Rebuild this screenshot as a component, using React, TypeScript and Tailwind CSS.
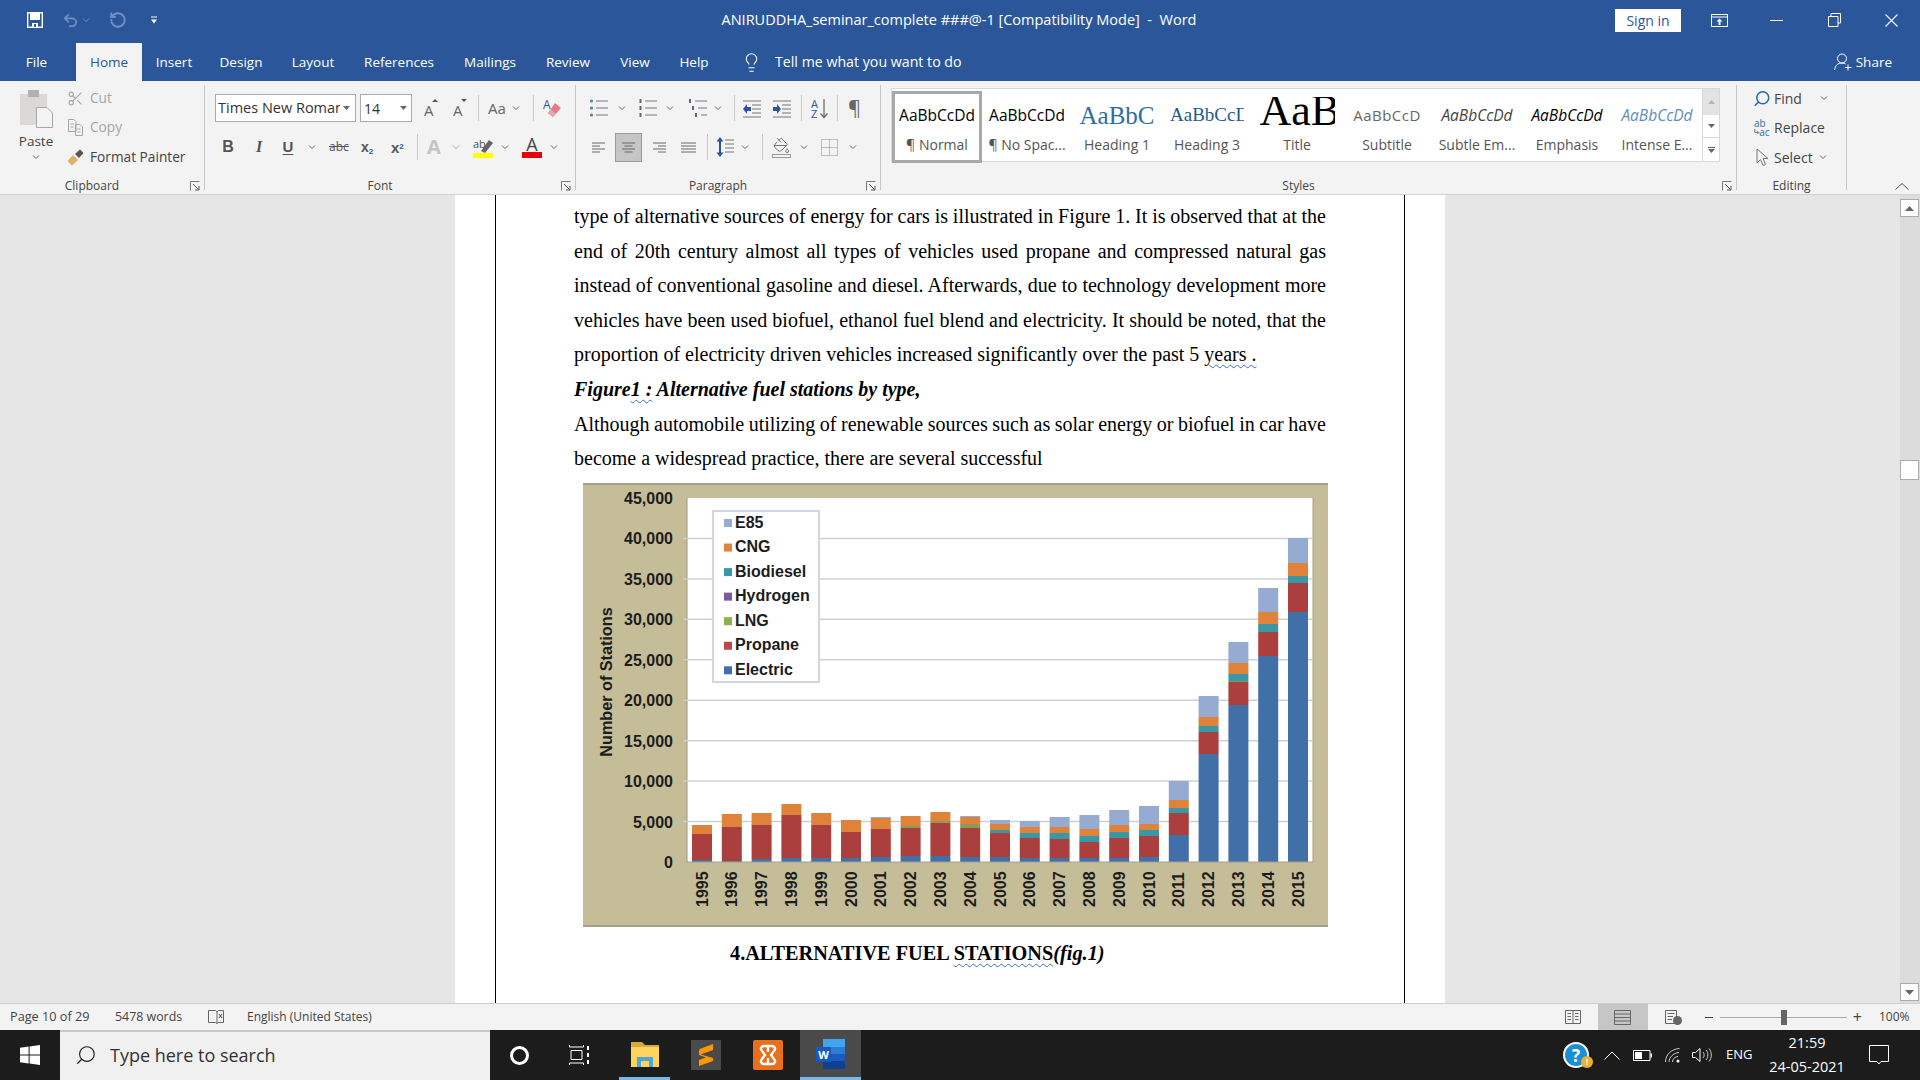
import React from "react";
import { Scissors, Search, Undo2, RotateCcw, PaintBucket, Lightbulb } from "lucide-react";

const ui = "font-['Open_Sans',sans-serif]";

const tabs = [
  { name: "File", w: "w-[76px] pr-[3px]" },
  { name: "Home", w: "w-[66px]" },
  { name: "Insert", w: "w-[64px]" },
  { name: "Design", w: "w-[70px]" },
  { name: "Layout", w: "w-[74px]" },
  { name: "References", w: "w-[98px]" },
  { name: "Mailings", w: "w-[84px]" },
  { name: "Review", w: "w-[72px]" },
  { name: "View", w: "w-[62px]" },
  { name: "Help", w: "w-[56px]" },
];

// cumulative px above the baseline: electric, propane, lng, biodiesel, cng, e85
const bars = [
  [1995, 2, 28, 28, 28, 37, 37],
  [1996, 1, 35, 35, 35, 48, 48],
  [1997, 3, 37, 37, 37, 49, 49],
  [1998, 4, 47, 47, 47, 58, 58],
  [1999, 4, 37, 37, 37, 49, 49],
  [2000, 4, 30, 30, 30, 42, 42],
  [2001, 5, 33, 33, 33, 44, 45],
  [2002, 6, 34, 36, 36, 46, 46],
  [2003, 6, 39, 41, 41, 50, 50],
  [2004, 5, 34, 38, 38, 45, 46],
  [2005, 5, 29, 29, 32, 38, 42],
  [2006, 4, 24, 24, 29, 35, 41],
  [2007, 4, 23, 23, 29, 35, 45],
  [2008, 4, 20, 20, 26, 33, 47],
  [2009, 4, 24, 24, 30, 37, 52],
  [2010, 5, 26, 26, 32, 38, 56],
  [2011, 27, 49, 49, 54, 62, 81],
  [2012, 108, 130, 130, 136, 145, 166],
  [2013, 157, 180, 181, 188, 199, 220],
  [2014, 206, 230, 230, 238, 250, 274],
  [2015, 250, 279, 279, 286, 299, 324],
];
const barColors = ["#4170a8", "#ab3f3e", "#8a9a5b", "#3a97a8", "#e0833a", "#95abd2"];
const legend = [
  ["E85", "#95abd2"],
  ["CNG", "#e0833a"],
  ["Biodiesel", "#3a97a8"],
  ["Hydrogen", "#7a5c9c"],
  ["LNG", "#8fb04f"],
  ["Propane", "#ba4a48"],
  ["Electric", "#4170a8"],
];

function Chart() {
  const font = "'Liberation Sans', Arial, sans-serif";
  return (
    <svg width="745" height="444" viewBox="0 0 745 444" className="block">
      <rect x="0" y="0" width="745" height="444" fill="#c4bd97" />
      <rect x="0" y="0" width="745" height="2" fill="#a3a08c" />
      <rect x="0" y="442" width="745" height="2" fill="#a3a08c" />
      <rect x="104" y="15" width="626" height="364" fill="#fff" />
      <line x1="104" y1="15" x2="104" y2="379" stroke="#9a9686" />
      <line x1="730" y1="15" x2="730" y2="379" stroke="#a89c8c" />
      {[0, 1, 2, 3, 4, 5, 6, 7, 8, 9].map((i) => {
        const y = 15 + i * 40.44;
        const label = ((9 - i) * 5000).toLocaleString("en-US");
        return (
          <g key={i}>
            {i > 0 && i < 9 && <line x1="100" y1={y} x2="730" y2={y} stroke="#cfcfd6" strokeWidth="1.5" />}
            <text x="90" y={y + 6} textAnchor="end" fontFamily={font} fontWeight="700" fontSize="16" fill="#1c1c1c">
              {label}
            </text>
          </g>
        );
      })}
      {bars.map((b, i) => {
        const x = 109 + i * 29.8;
        return (
          <g key={b[0]}>
            {barColors.map((c, s) => {
              const from = s === 0 ? 0 : b[s];
              const to = b[s + 1];
              return to > from ? <rect key={s} x={x} y={379 - to} width="20" height={to - from} fill={c} /> : null;
            })}
            <text
              transform={`translate(${x + 15.5} 424) rotate(-90)`}
              fontFamily={font}
              fontWeight="700"
              fontSize="16"
              fill="#1c1c1c"
            >
              {b[0]}
            </text>
          </g>
        );
      })}
      <line x1="104" y1="379" x2="730" y2="379" stroke="#a89c8c" />
      <text
        transform="translate(29 199) rotate(-90)"
        textAnchor="middle"
        fontFamily={font}
        fontWeight="700"
        fontSize="16.2"
        fill="#1c1c1c"
      >
        Number of Stations
      </text>
      <rect x="130" y="28" width="106" height="171" fill="#fff" stroke="#d3d6e2" strokeWidth="2" />
      {legend.map(([name, color], i) => (
        <g key={name}>
          <rect x="141" y={36 + i * 24.55} width="8" height="8" fill={color} />
          <text x="152" y={44.5 + i * 24.55} fontFamily={font} fontWeight="700" fontSize="16" fill="#1c1c1c">
            {name}
          </text>
        </g>
      ))}
    </svg>
  );
}

function Chev({ className = "", color = "#666" }: { className?: string; color?: string }) {
  return (
    <svg viewBox="0 0 8 5" className={`w-[8px] h-[5px] shrink-0 ${className}`}>
      <polyline points="1,0.5 4,3.5 7,0.5" fill="none" stroke={color} strokeWidth="1" />
    </svg>
  );
}

function Sep({ className = "" }: { className?: string }) {
  return <div className={`w-px h-[26px] bg-[#c8c8c8] shrink-0 ${className}`} />;
}

function Launcher() {
  return (
    <svg viewBox="0 0 10 10" className="w-[10px] h-[10px] shrink-0">
      <path d="M0.5 9.5V0.5H9.5" fill="none" stroke="#7a7a7a" />
      <path d="M3 3L8.5 8.5M9 5V9H5" fill="none" stroke="#555" />
    </svg>
  );
}

function Group({
  w,
  label,
  launcher,
  border = true,
  children,
}: {
  w: string;
  label: string;
  launcher?: boolean;
  border?: boolean;
  children: React.ReactNode;
}) {
  return (
    <div className={`${w} h-[105px] mt-[4px] flex flex-col shrink-0 ${border ? "border-r border-[#c6c6c6]" : ""}`}>
      <div className="h-[93px]">{children}</div>
      <div className="h-[12px] flex text-[12px] leading-[16px] text-[#444]">
        <div className="flex-1 text-center">{label}</div>
        {launcher && (
          <div className="w-[20px] pt-[3px] pl-[6px]">
            <Launcher />
          </div>
        )}
      </div>
    </div>
  );
}

function LinesIcon({ className = "", kind }: { className?: string; kind: "left" | "center" | "right" | "justify" }) {
  const rows = [0, 1, 2, 3];
  const short = kind === "justify" ? 13 : 8;
  return (
    <svg viewBox="0 0 13 11" preserveAspectRatio="none" className={`h-[11px] shrink-0 ${className}`}>
      {rows.map((r) => {
        const len = r % 2 === 0 ? 13 : short;
        const x = kind === "right" ? 13 - len : kind === "center" ? (13 - len) / 2 : 0;
        return <line key={r} x1={x} x2={x + len} y1={1 + r * 3} y2={1 + r * 3} stroke="#666" />;
      })}
    </svg>
  );
}

function ListIcon({ kind, className = "" }: { kind: "bullet" | "number" | "multi"; className?: string }) {
  const marks = [2, 9, 16];
  return (
    <svg viewBox="0 0 20 19" className={`w-[20px] h-[19px] shrink-0 ${className}`}>
      {marks.map((y, i) => (
        <g key={y}>
          {kind === "bullet" && <circle cx="2.5" cy={y} r="1.6" fill="#5a7ea8" />}
          {kind === "number" && <rect x="1.5" y={y - 2} width="2" height="4" fill="#666" />}
          {kind === "multi" && <rect x={1 + i * 3} y={y - 2} width="2" height="4" fill="#667" />}
          <line x1={kind === "multi" ? 7 + i * 3 : 7} x2="19" y1={y} y2={y} stroke="#777" />
        </g>
      ))}
    </svg>
  );
}

function IndentIcon({ flip, className = "" }: { flip?: boolean; className?: string }) {
  return (
    <svg viewBox="0 0 20 19" className={`w-[20px] h-[19px] shrink-0 ${className}`}>
      {[2, 6, 10, 14, 18].map((y) => (
        <line key={y} x1={y === 2 || y === 18 ? 1 : 10} x2="19" y1={y} y2={y} stroke="#777" />
      ))}
      {flip ? (
        <path d="M1 8H5V5L9 10L5 15V12H1Z" fill="#2b579a" />
      ) : (
        <path d="M9 8H5V5L1 10L5 15V12H9Z" fill="#2b579a" />
      )}
    </svg>
  );
}

function StyleCell({
  label,
  children,
  active,
}: {
  label: string;
  children: React.ReactNode;
  active?: boolean;
}) {
  return (
    <div
      className={`w-[90px] shrink-0 h-[72px] flex flex-col items-center overflow-hidden ${
        active ? "border-[3px] border-[#a9a9a9] h-[70px] mt-[2px] bg-white" : "pt-[5px]"
      }`}
    >
      <div className="w-[84px] h-[43px] flex items-center justify-center overflow-hidden whitespace-nowrap">
        {children}
      </div>
      <div className="text-[14px] leading-[18px] text-[#555] whitespace-nowrap mt-[-1px]">{label}</div>
    </div>
  );
}

function EditRow({ icon, text, chev }: { icon: React.ReactNode; text: string; chev?: string }) {
  return (
    <div className="h-[26px] flex items-center">
      <div className="w-[18px] ml-[16px] shrink-0 flex justify-center">{icon}</div>
      <span className="ml-[3px] text-[14px] text-[#444]">{text}</span>
      {chev && <Chev className={chev} />}
    </div>
  );
}

function TopBar() {
  return (
    <div className="h-[40px] bg-[#2b579a] flex items-center text-white shrink-0">
      <div className="w-[720px] flex items-center shrink-0">
        <svg viewBox="0 0 16 16" className="w-[16px] h-[16px] ml-[27px]">
          <path d="M0.7 0.7H15.3V15.3H0.7Z" fill="none" stroke="#fff" strokeWidth="1.4" />
          <rect x="3" y="1" width="10" height="7" fill="#fff" />
          <rect x="5" y="11" width="6" height="4" fill="#fff" />
          <rect x="7" y="12" width="2" height="3" fill="#2b579a" />
        </svg>
        <Undo2 className="w-[19px] h-[17px] ml-[18px] text-[#6f8fc4]" strokeWidth={2.4} />
        <Chev className="ml-[2px]" color="#6f8fc4" />
        <RotateCcw className="w-[18px] h-[18px] ml-[19px] text-[#6f8fc4]" strokeWidth={2.6} />
        <svg viewBox="0 0 6 8" className="w-[6px] h-[8px] ml-[24px]">
          <line x1="0" x2="6" y1="1" y2="1" stroke="#fff" />
          <path d="M0 3.5H6L3 7.5Z" fill="#fff" />
        </svg>
      </div>
      <div className={`${ui} w-[478px] text-center text-[14.5px] whitespace-nowrap shrink-0`}>
        ANIRUDDHA_seminar_complete ###@-1 [Compatibility Mode] &nbsp;-&nbsp; Word
      </div>
      <div className={`${ui} ml-[417px] w-[66px] h-[23px] bg-white text-[#2b579a] text-[14px] flex items-center justify-center shrink-0`}>
        Sign in
      </div>
      <svg viewBox="0 0 17 13" className="w-[17px] h-[13px] ml-[30px] shrink-0">
        <path d="M0.5 0.5H16.5V12.5H0.5ZM0.5 3H16.5" fill="none" stroke="#fff" />
        <path d="M8.5 4.5L11.5 7.5H9.5V11H7.5V7.5H5.5Z" fill="#fff" />
      </svg>
      <div className="w-[13px] h-px bg-white ml-[42px] shrink-0" />
      <svg viewBox="0 0 13 14" className="w-[13px] h-[14px] ml-[45px] shrink-0">
        <path d="M3 3V0.5H12.5V10H10M0.5 3.5H10V13.5H0.5Z" fill="none" stroke="#fff" />
      </svg>
      <svg viewBox="0 0 13 13" className="w-[13px] h-[13px] ml-[44px] shrink-0">
        <path d="M0.5 0.5L12.5 12.5M12.5 0.5L0.5 12.5" stroke="#fff" strokeWidth="1.1" />
      </svg>
    </div>
  );
}

function TabRow() {
  return (
    <div className={`${ui} h-[41px] bg-[#2b579a] flex items-end text-white text-[13.5px] shrink-0`}>
      {tabs.map((t) => (
        <div
          key={t.name}
          className={`${t.w} h-[38px] flex items-center justify-center shrink-0 ${
            t.name === "Home" ? "bg-[#f3f3f3] text-[#2b579a]" : ""
          }`}
        >
          {t.name}
        </div>
      ))}
      <div className="h-[38px] flex items-center ml-[19px]">
        <Lightbulb className="w-[21px] h-[21px] text-white" strokeWidth={1.2} />
        <span className="ml-[13px] text-[14.2px]">Tell me what you want to do</span>
      </div>
      <div className="h-[38px] flex items-center ml-auto pr-[28px]">
        <svg viewBox="0 0 18 18" className="w-[18px] h-[18px]">
          <circle cx="8" cy="5.5" r="4.5" fill="none" stroke="#fff" />
          <path d="M0.5 17C1.5 12 4 10 8 10C9.5 10 10.5 10.5 11.5 11" fill="none" stroke="#fff" />
          <path d="M14 11.5V17.5M11 14.5H17.5" stroke="#fff" />
        </svg>
        <span className="ml-[4px]">Share</span>
      </div>
    </div>
  );
}

function Ribbon() {
  return (
    <div className={`${ui} h-[114px] bg-[#f3f3f3] border-b border-[#d2d2d2] flex shrink-0`}>
      <Group w="w-[205px]" label="Clipboard" launcher>
        <div className="flex">
          <div className="w-[60px] ml-[6px] flex flex-col items-center shrink-0">
            <svg viewBox="0 0 33 38" className="w-[33px] h-[38px] mt-[5px]">
              <rect x="0" y="4" width="27" height="31" fill="#dcd8d8" />
              <rect x="8" y="0" width="11" height="7" fill="#b5b0b0" />
              <path d="M16.5 17.5H27L32.5 23V37.5H16.5Z" fill="#f3f3f3" stroke="#a8a8a8" />
            </svg>
            <div className="text-[13.5px] leading-[18px] text-[#444] mt-[4px]">Paste</div>
            <Chev className="mt-[5px]" />
          </div>
          <div className="flex flex-col gap-[3.5px] text-[13.7px] text-[#a6a6a6]">
            <div className="h-[26px] flex items-center">
              <Scissors className="w-[17px] h-[17px] ml-[1px] text-[#a6a6a6]" strokeWidth={1.5} />
              <span className="ml-[6px]">Cut</span>
            </div>
            <div className="h-[26px] flex items-center">
              <svg viewBox="0 0 17 17" className="w-[17px] h-[17px] ml-[1px]">
                <path d="M1.5 0.5H7L9 2.5V12.5H1.5ZM8.5 5.5H13L15.5 8V16.5H8.5Z" fill="#f3f3f3" stroke="#a6a6a6" />
                <path d="M3.5 5H7M3.5 8H6.5M10.5 10H13.5M10.5 13H13.5" stroke="#a6a6a6" />
              </svg>
              <span className="ml-[6px]">Copy</span>
            </div>
            <div className="h-[26px] flex items-center text-[#444]">
              <svg viewBox="0 0 17 17" className="w-[17px] h-[17px] ml-[1px]">
                <path d="M0.5 12L6 6L11 11L5 16.5Z" fill="#dfb065" />
                <path d="M8 5L13 0.5L16.5 4L12 9Z" fill="#555" />
              </svg>
              <span className="ml-[6px] whitespace-nowrap">Format Painter</span>
            </div>
          </div>
        </div>
      </Group>

      <Group w="w-[371px]" label="Font" launcher>
        <div className="flex items-center h-[28px] mt-[9px]">
          <div className="ml-[10px] w-[141px] h-[28px] bg-white border border-[#ababab] flex items-center text-[14.5px] text-[#333] pl-[2px] shrink-0">
            <span className="w-[122px] overflow-hidden whitespace-nowrap">Times New Roman</span>
            <svg viewBox="0 0 7 4" className="w-[7px] h-[4px] ml-[3px]"><path d="M0 0H7L3.5 4Z" fill="#666" /></svg>
          </div>
          <div className="ml-[4px] w-[52px] h-[28px] bg-white border border-[#ababab] flex items-center text-[14px] text-[#333] pl-[3px] shrink-0">
            <span className="w-[36px]">14</span>
            <svg viewBox="0 0 7 4" className="w-[7px] h-[4px]"><path d="M0 0H7L3.5 4Z" fill="#666" /></svg>
          </div>
          <svg viewBox="0 0 14 18" className="w-[14px] h-[18px] ml-[12px] shrink-0">
            <text x="0" y="17" fontSize="15" fill="#666" fontFamily="Open Sans, sans-serif">A</text>
            <path d="M8 3L11 0L14 3Z" fill="#555" />
          </svg>
          <svg viewBox="0 0 14 18" className="w-[14px] h-[18px] ml-[15px] shrink-0">
            <text x="0" y="17" fontSize="15" fill="#666" fontFamily="Open Sans, sans-serif">A</text>
            <path d="M8 0L11 3L14 0Z" fill="#555" />
          </svg>
          <Sep className="ml-[11px]" />
          <span className="ml-[9px] w-[18px] text-[15px] text-[#666] shrink-0">Aa</span>
          <Chev className="ml-[6px]" />
          <Sep className="ml-[13px]" />
          <svg viewBox="0 0 18 20" className="w-[18px] h-[20px] ml-[9px] shrink-0">
            <text x="0" y="11" fontSize="12" fill="#2b579a" fontFamily="Open Sans, sans-serif">A</text>
            <path d="M12 5L18 10L10 19L5 15Z" fill="#e8798a" />
            <path d="M5 15L8 11.5L13 16L10 19Z" fill="#e0a8b0" />
          </svg>
        </div>
        <div className="flex items-center h-[28px] mt-[11px] text-[#555]">
          <span className="ml-[15px] w-[16px] text-center font-['Liberation_Sans',sans-serif] font-bold text-[16px] shrink-0">B</span>
          <span className="ml-[15px] w-[16px] text-center font-['Liberation_Serif',serif] italic font-bold text-[16px] shrink-0">I</span>
          <span className="ml-[13px] w-[16px] text-center font-['Liberation_Sans',sans-serif] font-bold text-[15px] underline underline-offset-2 shrink-0">U</span>
          <Chev className="ml-[12px]" />
          <span className="ml-[13px] w-[19px] text-center text-[12px] line-through shrink-0">abc</span>
          <span className="ml-[13px] w-[14px] font-['Liberation_Sans',sans-serif] font-bold text-[14px] shrink-0 leading-none">
            x<sub className="text-[8px] text-[#2b579a]">2</sub>
          </span>
          <span className="ml-[16px] w-[15px] font-['Liberation_Sans',sans-serif] font-bold text-[15px] shrink-0 leading-none">
            x<sup className="text-[8px] text-[#2b579a]">2</sup>
          </span>
          <Sep className="ml-[11px]" />
          <span className="ml-[9px] w-[16px] text-[20px] text-[#c4c4c4] font-bold leading-none shrink-0">A</span>
          <Chev className="ml-[9px]" color="#b0b0b0" />
          <svg viewBox="0 0 20 21" className="w-[20px] h-[21px] ml-[13px] shrink-0">
            <text x="0" y="11" fontSize="11" fill="#555" fontFamily="Open Sans, sans-serif">ab</text>
            <path d="M8 14L16 3L20 6L12 16Z" fill="#666" />
            <rect x="0" y="16" width="20" height="5" fill="#ffff00" />
          </svg>
          <Chev className="ml-[8px]" />
          <svg viewBox="0 0 20 22" className="w-[20px] h-[22px] ml-[13px] shrink-0">
            <text x="10" y="15" textAnchor="middle" fontSize="18" fill="#444" fontFamily="Open Sans, sans-serif">A</text>
            <rect x="0" y="16" width="20" height="6" fill="#e8000b" />
          </svg>
          <Chev className="ml-[8px]" />
        </div>
      </Group>

      <Group w="w-[305px]" label="Paragraph" launcher>
        <div className="flex items-center h-[28px] mt-[9px]">
          <ListIcon kind="bullet" className="ml-[13px]" />
          <Chev className="ml-[9px]" />
          <ListIcon kind="number" className="ml-[12px]" />
          <Chev className="ml-[8px]" />
          <ListIcon kind="multi" className="ml-[14px] w-[19px]" />
          <Chev className="ml-[6px]" />
          <Sep className="ml-[12px]" />
          <IndentIcon className="ml-[7px] w-[19px]" />
          <IndentIcon flip className="ml-[10px]" />
          <Sep className="ml-[9px]" />
          <svg viewBox="0 0 18 21" className="w-[18px] h-[21px] ml-[9px] shrink-0">
            <text x="0" y="9.5" fontSize="11" fill="#2b579a" fontFamily="Open Sans, sans-serif">A</text>
            <text x="0" y="20" fontSize="11" fill="#2b579a" fontFamily="Open Sans, sans-serif">Z</text>
            <path d="M13 1V19M9.5 15.5L13 19.5L16.5 15.5" fill="none" stroke="#666" strokeWidth="1.2" />
          </svg>
          <Sep className="ml-[8px]" />
          <span className="ml-[10px] w-[12px] text-[20px] leading-none text-[#666] shrink-0">¶</span>
        </div>
        <div className="flex items-center h-[28px] mt-[11px]">
          <LinesIcon kind="left" className="ml-[16px] w-[13px]" />
          <div className="ml-[10px] w-[27px] h-[29px] bg-[#c6c6c6] border border-[#9b9b9b] flex items-center justify-center shrink-0">
            <LinesIcon kind="center" className="w-[13px]" />
          </div>
          <LinesIcon kind="right" className="ml-[11px] w-[13px]" />
          <LinesIcon kind="justify" className="ml-[15px] w-[15px]" />
          <Sep className="ml-[11px]" />
          <svg viewBox="0 0 18 20" className="w-[18px] h-[20px] ml-[8px] shrink-0">
            <path d="M4 0L7.5 4.5H5V15.5H7.5L4 20L0.5 15.5H3V4.5H0.5Z" fill="#2b579a" />
            <path d="M9 3H18M9 7H18M9 11H18M9 15H18" stroke="#777" />
          </svg>
          <Chev className="ml-[7px]" />
          <Sep className="ml-[13px]" />
          <div className="ml-[9px] w-[19px] shrink-0">
            <PaintBucket className="w-[19px] h-[17px] text-[#666]" strokeWidth={1.3} />
            <div className="w-[19px] h-[4px] border border-[#999] bg-[#f3f3f3]" />
          </div>
          <Chev className="ml-[9px]" />
          <svg viewBox="0 0 17 17" className="w-[17px] h-[17px] ml-[13px] shrink-0">
            <path d="M0.5 0.5H16.5V16.5H0.5ZM8.5 0.5V16.5M0.5 8.5H16.5" fill="none" stroke="#888" strokeDasharray="1 1" />
          </svg>
          <Chev className="ml-[11px]" />
        </div>
      </Group>

      <Group w="w-[856px]" label="Styles" launcher>
        <div className="flex ml-[10px] mt-[3px]">
          <div className="h-[74px] bg-white border-y border-l border-[#d8d8d8] flex">
            <StyleCell label="¶ Normal" active>
              <span className="text-[15.5px] text-black">AaBbCcDd</span>
            </StyleCell>
            <StyleCell label="¶ No Spac...">
              <span className="text-[15.5px] text-black">AaBbCcDd</span>
            </StyleCell>
            <StyleCell label="Heading 1">
              <span className="font-['Liberation_Serif',serif] text-[25px] text-[#2e6da4]">AaBbC</span>
            </StyleCell>
            <StyleCell label="Heading 3">
              <div className="w-[74px] overflow-hidden font-['Liberation_Serif',serif] text-[19px] text-[#245a8d]">AaBbCcD</div>
            </StyleCell>
            <StyleCell label="Title">
              <div className="w-[75px] h-[29px] self-start mt-[3px] overflow-hidden font-['Liberation_Serif',serif] text-[44px] leading-[27px] text-black">
                AaB
              </div>
            </StyleCell>
            <StyleCell label="Subtitle">
              <span className="text-[15px] tracking-[0.5px] text-[#666]">AaBbCcD</span>
            </StyleCell>
            <StyleCell label="Subtle Em...">
              <span className="text-[15.5px] italic text-[#444]">AaBbCcDd</span>
            </StyleCell>
            <StyleCell label="Emphasis">
              <span className="text-[15.5px] italic text-black">AaBbCcDd</span>
            </StyleCell>
            <StyleCell label="Intense E...">
              <span className="text-[15.5px] italic text-[#5b8ec0]">AaBbCcDd</span>
            </StyleCell>
          </div>
          <div className="w-[18px] h-[74px] flex flex-col border border-[#d8d8d8] bg-white">
            <div className="h-[26px] bg-[#e3e3e3] flex items-center justify-center">
              <svg viewBox="0 0 7 4" className="w-[7px] h-[4px]"><path d="M0 4H7L3.5 0Z" fill="#b5b5b5" /></svg>
            </div>
            <div className="h-[23px] border-b border-[#d8d8d8] flex items-center justify-center">
              <svg viewBox="0 0 7 4" className="w-[7px] h-[4px]"><path d="M0 0H7L3.5 4Z" fill="#666" /></svg>
            </div>
            <div className="flex-1 flex flex-col gap-[1px] items-center justify-center">
              <div className="w-[7px] h-px bg-[#666]" />
              <svg viewBox="0 0 7 4" className="w-[7px] h-[4px]"><path d="M0 0H7L3.5 4Z" fill="#666" /></svg>
            </div>
          </div>
        </div>
      </Group>

      <Group w="w-[110px]" label="Editing">
        <div className="flex flex-col gap-[3.5px]">
          <EditRow
            icon={<Search className="w-[19px] h-[19px] text-[#2b6ca8] -scale-x-100" strokeWidth={2.1} />}
            text="Find"
            chev="ml-[18px]"
          />
          <EditRow
            icon={
              <svg viewBox="0 0 20 20" className="w-[20px] h-[20px]">
                <text x="1" y="9" fontSize="11" fill="#2b6ca8" fontFamily="Open Sans, sans-serif">ab</text>
                <text x="7" y="19" fontSize="11" fill="#2b6ca8" fontFamily="Open Sans, sans-serif">ac</text>
                <path d="M2 11V15H6M4.5 13L6.5 15L4.5 17" fill="none" stroke="#666" />
              </svg>
            }
            text="Replace"
          />
          <EditRow
            icon={
              <svg viewBox="0 0 13 19" className="w-[13px] h-[19px]">
                <path d="M1 1V15L4.5 11.5L7 17.5L9.5 16.5L7 10.5H12Z" fill="#f3f3f3" stroke="#777" />
              </svg>
            }
            text="Select"
            chev="ml-[6px]"
          />
        </div>
      </Group>
      <div className="flex-1 flex items-end justify-end pr-[11px] pb-[4px]">
        <svg viewBox="0 0 14 7" className="w-[14px] h-[7px]">
          <polyline points="0.5,6.5 7,0.5 13.5,6.5" fill="none" stroke="#555" />
        </svg>
      </div>
    </div>
  );
}

// one justified line with the reference's own break; word spacing is squeezed so the line never wraps
function Line({ children }: { children: React.ReactNode }) {
  return <span className="block text-justify [text-align-last:justify] [word-spacing:-2px]">{children}</span>;
}

function Page() {
  const spell = "underline decoration-wavy decoration-[#3f70b5] decoration-1 underline-offset-[3px]";
  return (
    <div className="ml-[455px] w-[990px] h-full bg-white shrink-0">
      <div className="ml-[40px] w-[910px] h-full border-x border-black pl-[78px] pt-[4px] font-['Liberation_Serif',serif] text-[20px] leading-[34.6px] text-black">
        <div className="w-[752px]">
          <p>
            <Line>type of alternative sources of energy for cars is illustrated in Figure 1. It is observed that at the</Line>
            <Line>end of 20th century almost all types of vehicles used propane and compressed natural gas</Line>
            <Line>instead of conventional gasoline and diesel. Afterwards, due to technology development more</Line>
            <Line>vehicles have been used biofuel, ethanol fuel blend and electricity. It should be noted, that the</Line>
            proportion of electricity driven vehicles increased significantly over the past 5{" "}
            <span className={spell}>years .</span>
          </p>
          <p className="font-bold italic">
            Figure<span className={spell}>1 :</span> Alternative fuel stations by type,
          </p>
          <p>
            <Line>Although automobile utilizing of renewable sources such as solar energy or biofuel in car have</Line>
            become a widespread practice, there are several successful
          </p>
          <div className="mt-[7px] ml-[9px] w-[745px]">
            <Chart />
          </div>
          <p className="font-bold text-[20.3px] mt-[9px] pl-[156px] whitespace-nowrap">
            4.ALTERNATIVE FUEL <span className={spell}>STATIONS</span>
            <span className="italic">(fig.1)</span>
          </p>
        </div>
      </div>
    </div>
  );
}

function Scrollbar() {
  return (
    <div className="ml-auto w-[20px] h-full bg-[#dcdcdc] flex flex-col shrink-0">
      <div className="mt-[4px] h-[18px] w-[19px] bg-white border border-[#ababab] flex items-center justify-center">
        <svg viewBox="0 0 9 5" className="w-[9px] h-[5px]"><path d="M0 5H9L4.5 0Z" fill="#666" /></svg>
      </div>
      <div className="mt-[243px] h-[20px] w-[19px] bg-white border border-[#ababab]" />
      <div className="mt-auto mb-[2px] h-[18px] w-[19px] bg-white border border-[#ababab] flex items-center justify-center">
        <svg viewBox="0 0 9 5" className="w-[9px] h-[5px]"><path d="M0 0H9L4.5 5Z" fill="#666" /></svg>
      </div>
    </div>
  );
}

function StatusBar() {
  return (
    <div className={`${ui} h-[27px] bg-[#f3f3f3] border-t border-[#cfcfcf] flex items-center text-[12px] text-[#444] shrink-0`}>
      <span className="ml-[10px] w-[105px] whitespace-nowrap text-[12.7px]">Page 10 of 29</span>
      <span className="w-[93px] whitespace-nowrap text-[12.4px]">5478 words</span>
      <svg viewBox="0 0 16 14" className="w-[16px] h-[14px]">
        <path d="M0.5 0.5H7.5L9 2V13.5L7.5 12.5H0.5ZM9 2L10.5 0.5H15.5V12.5H10.5L9 13.5" fill="none" stroke="#666" />
        <path d="M11 4L14 8M14 4L11 8" stroke="#444" />
      </svg>
      <span className="ml-[23px] whitespace-nowrap">English (United States)</span>
      <div className="ml-auto flex items-center h-full pr-[11px]">
        <svg viewBox="0 0 16 14" className="w-[16px] h-[14px]">
          <path d="M0.5 0.5H15.5V13.5H0.5ZM8 0.5V13.5M2.5 3.5H6M2.5 6.5H6M2.5 9.5H6M10 3.5H13.5M10 6.5H13.5M10 9.5H13.5" fill="none" stroke="#666" />
        </svg>
        <div className="ml-[17px] w-[50px] h-full bg-[#c6c6c6] flex items-center justify-center">
          <svg viewBox="0 0 17 15" className="w-[17px] h-[15px]">
            <path d="M0.5 0.5H16.5V14.5H0.5ZM0.5 4H16.5M0.5 7.5H16.5M0.5 11H16.5" fill="none" stroke="#666" />
          </svg>
        </div>
        <svg viewBox="0 0 17 15" className="w-[17px] h-[15px] ml-[17px]">
          <path d="M0.5 0.5H11.5V13.5H0.5ZM2.5 3.5H9.5M2.5 6.5H8M2.5 9.5H7" fill="none" stroke="#666" />
          <circle cx="12.5" cy="10.5" r="4.5" fill="#666" />
        </svg>
        <div className="ml-[23px] w-[8px] h-px bg-[#444]" />
        <div className="ml-[7px] w-[127px] h-px bg-[#aaa] relative">
          <div className="absolute left-[61px] top-[-7px] w-[6px] h-[15px] bg-[#666]" />
        </div>
        <span className="ml-[6px] text-[16px] leading-none">+</span>
        <span className="ml-[17px] w-[30px] whitespace-nowrap">100%</span>
      </div>
    </div>
  );
}

function Taskbar() {
  return (
    <div className={`${ui} h-[50px] bg-[#1c1c1c] flex items-center text-white shrink-0`}>
      <div className="w-[60px] h-full flex items-center justify-center shrink-0">
        <svg viewBox="0 0 20 20" className="w-[20px] h-[20px]">
          <path d="M0 2.8L8.6 1.6V9.5H0ZM9.6 1.5L20 0V9.5H9.6ZM0 10.5H8.6V18.4L0 17.2ZM9.6 10.5H20V20L9.6 18.5Z" fill="#fff" />
        </svg>
      </div>
      <div className="w-[430px] h-full bg-[#f0f0f0] border-t-2 border-[#c8c8c8] flex items-center text-[#333] text-[18px] pb-[2px] shrink-0">
        <Search className="w-[22px] h-[22px] ml-[15px] -scale-x-100 text-[#222]" strokeWidth={1.3} />
        <span className="ml-[13px] whitespace-nowrap">Type here to search</span>
      </div>
      <div className="ml-[20px] w-[19px] h-[19px] rounded-full border-[3px] border-white shrink-0" />
      <svg viewBox="0 0 21 20" className="w-[21px] h-[20px] ml-[40px] shrink-0">
        <path d="M0.5 0V2H14.5V0M0.5 20V18H14.5V20M2 5.5H13V14.5H2Z" fill="none" stroke="#fff" />
        <path d="M19 1V5M19 8V12M19 15V19" stroke="#fff" strokeWidth="2" />
      </svg>
      <div className="ml-[29px] w-[51px] h-full flex items-center justify-center border-b-[3px] border-[#76b9ed] shrink-0">
        <svg viewBox="0 0 28 26" className="w-[28px] h-[26px]">
          <path d="M0 1H11L14 4H28V7H0Z" fill="#d9a93a" />
          <rect x="0" y="6" width="28" height="20" fill="#ffd45c" />
          <path d="M6 26V16H22V26H18V20H10V26Z" fill="#4ea6dc" />
        </svg>
      </div>
      <div className="ml-[21px] w-[30px] h-[30px] bg-[#4a4a4a] flex items-center justify-center shrink-0">
        <svg viewBox="0 0 16 22" className="w-[16px] h-[22px]">
          <path d="M15 0V6L1 11V7C1 6 1.5 5 3 4.5ZM1 10L15 14V17L1 22V16L8 13.5L1 11Z" fill="#ff9800" />
        </svg>
      </div>
      <div className="ml-[32px] w-[30px] h-[30px] bg-[#e8701a] rounded-[2px] flex items-center justify-center shrink-0">
        <svg viewBox="0 0 24 24" className="w-[24px] h-[24px]">
          <path
            d="M8 3H16C19 3 20 6 18 8L15 12L18 16C20 18 19 21 16 21H8C5 21 4 18 6 16L9 12L6 8C4 6 5 3 8 3ZM12 3V9M12 15V21"
            fill="none"
            stroke="#fff"
            strokeWidth="2.4"
          />
        </svg>
      </div>
      <div className="ml-[17px] w-[61px] h-full bg-[#4a4a4a] flex items-center justify-center border-b-[3px] border-[#76b9ed] shrink-0">
        <div className="relative w-[29px] h-[30px]">
          <div className="ml-[7px] w-[22px] h-[30px] flex flex-col">
            <div className="h-[8px] bg-[#41a5ee]" />
            <div className="h-[7px] bg-[#2b7cd3]" />
            <div className="h-[7px] bg-[#185abd]" />
            <div className="h-[8px] bg-[#103f91]" />
          </div>
          <div className="absolute left-0 top-[8px] w-[15px] h-[15px] bg-[#185abd] flex items-center justify-center text-[11px] font-bold leading-none">
            W
          </div>
        </div>
      </div>

      <div className="ml-auto flex items-center pr-[31px]">
        <div className="relative w-[30px] h-[26px] shrink-0">
          <div className="w-[26px] h-[26px] rounded-full bg-[#1c8ed6] border-2 border-white flex items-center justify-center text-[17px] font-bold leading-none">
            ?
          </div>
          <div className="absolute right-0 bottom-0 w-[12px] h-[12px] rounded-full bg-[#f0b030] text-[9px] text-white font-bold leading-[12px] text-center">
            !
          </div>
        </div>
        <svg viewBox="0 0 16 9" className="w-[16px] h-[9px] ml-[11px] shrink-0">
          <polyline points="0.5,8.5 8,1 15.5,8.5" fill="none" stroke="#fff" />
        </svg>
        <svg viewBox="0 0 19 11" className="w-[19px] h-[11px] ml-[13px] shrink-0">
          <path d="M0.5 0.5H17V10.5H0.5Z" fill="none" stroke="#fff" />
          <rect x="2" y="2" width="7" height="7" fill="#fff" />
          <rect x="17.5" y="3.5" width="1.5" height="4" fill="#fff" />
        </svg>
        <svg viewBox="0 0 15 15" className="w-[15px] h-[15px] ml-[13px] shrink-0">
          <path d="M0.5 14C0.5 7 6 1 14.5 0.5M4 14C4 9.5 8 5 14 4.5M7.5 14C7.5 11 10 8.5 13 8.5" fill="none" stroke="#ccc" />
          <circle cx="13" cy="13" r="1.5" fill="#fff" />
        </svg>
        <svg viewBox="0 0 20 14" className="w-[20px] h-[14px] ml-[12px] shrink-0">
          <path d="M0.5 4.5H3.5L8 0.5V13.5L3.5 9.5H0.5Z" fill="none" stroke="#fff" />
          <path d="M11 4C12.5 5.5 12.5 8.5 11 10M14 2C16.5 4.5 16.5 9.5 14 12M17 0.5C20 4 20 10 17 13.5" fill="none" stroke="#ccc" />
        </svg>
        <span className="ml-[14px] w-[27px] text-[13px] whitespace-nowrap shrink-0">ENG</span>
        <div className="w-[108px] text-center text-[14.5px] leading-[24px] shrink-0">
          <div>21:59</div>
          <div>24-05-2021</div>
        </div>
        <svg viewBox="0 0 20 20" className="w-[20px] h-[20px] ml-[8px] shrink-0">
          <path d="M0.5 0.5H19.5V16.5H12L10 19L8 16.5H0.5Z" fill="none" stroke="#fff" />
        </svg>
      </div>
    </div>
  );
}

export default function App() {
  return (
    <div className="w-[1920px] h-[1080px] flex flex-col overflow-hidden bg-[#e6e6e6]">
      <TopBar />
      <TabRow />
      <Ribbon />
      <div className="flex-1 min-h-0 flex overflow-hidden">
        <Page />
        <Scrollbar />
      </div>
      <StatusBar />
      <Taskbar />
    </div>
  );
}
